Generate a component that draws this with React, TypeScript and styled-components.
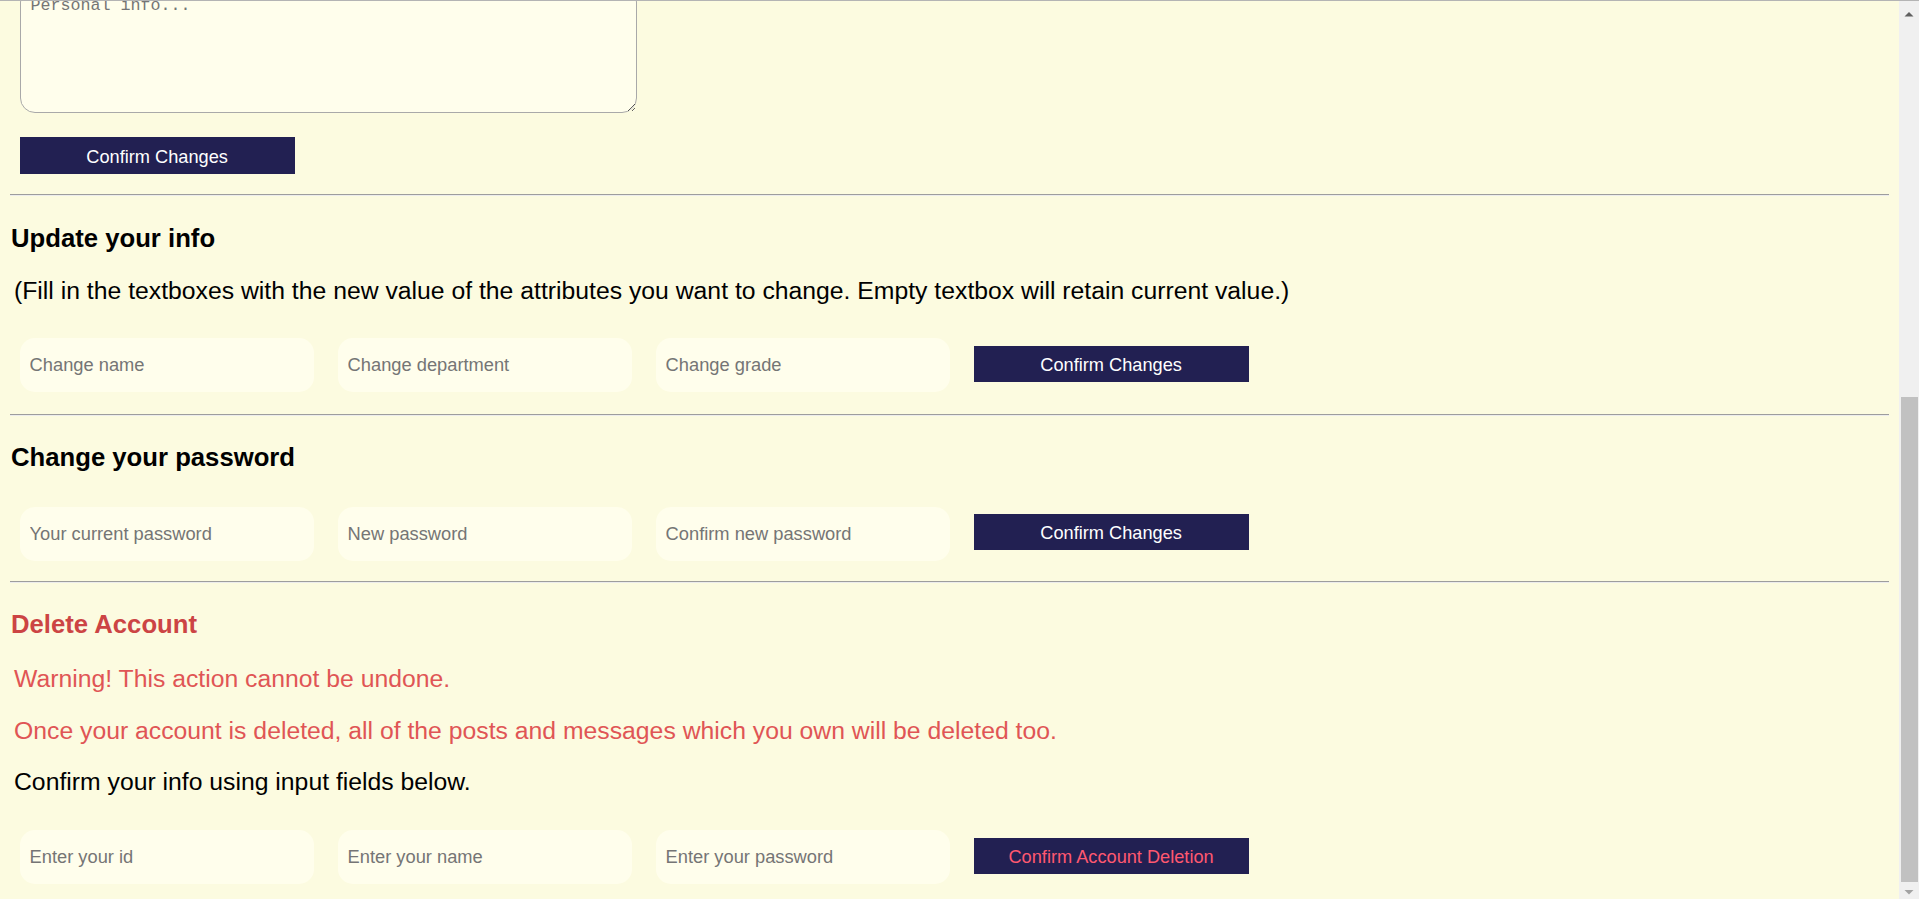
import styled, { createGlobalStyle } from 'styled-components';
import { useLayoutEffect, useRef } from 'react';

const GlobalStyle = createGlobalStyle`
  html, body {
    margin: 0;
    background: #fcfbe0;
  }
  body {
    font-family: "Liberation Sans", Arial, sans-serif;
    color: #000;
  }
`;

const Frame = styled.div`
  box-sizing: border-box;
  height: 100vh;
  display: flex;
  border-top: 1px solid #b4b4b4;
  overflow: hidden;
`;

const ScrollArea = styled.div`
  flex: 1;
  min-width: 0;
  overflow-y: auto;
  scrollbar-width: none;

  &::-webkit-scrollbar {
    display: none;
  }
`;

const Scrollbar = styled.div`
  width: 20px;
  flex: none;
  display: flex;
  flex-direction: column;
  background: #f0f0f0;
`;

const ScrollArrow = styled.svg`
  display: block;
  width: 20px;
  height: 17px;
  flex: none;
`;

const Track = styled.div`
  flex: 1;
  display: flex;
  flex-direction: column;
  justify-content: flex-end;
`;

const Thumb = styled.div`
  height: 485px;
  margin: 0 1px 0 2px;
  background: #c1c1c1;
`;

const Page = styled.main`
  display: flex;
  flex-direction: column;
  padding: 10px 10px 15px;
`;

const Upper = styled.section`
  height: 668px;
  display: flex;
  flex-direction: column;
`;

const Heading = styled.h3<{ danger?: boolean; top?: number }>`
  margin: ${(props) => props.top ?? 25}px 0 0 1px;
  font-size: 25.7px;
  line-height: 30px;
  font-weight: 700;
  color: ${(props) => (props.danger ? '#cc4444' : '#000')};
`;

const Text = styled.p<{ tone?: 'warn' | 'plain'; top?: number }>`
  margin: ${(props) => props.top ?? 22}px 0 0;
  padding-left: 4px;
  font-size: 24.75px;
  line-height: 30px;
  color: ${(props) => (props.tone === 'warn' ? '#e05555' : '#000')};
`;

const InfoBox = styled.textarea`
  box-sizing: border-box;
  margin: 10px 0 0 9.6px;
  width: 617px;
  height: 126px;
  padding: 8px 10px;
  border: 1px solid #a9a9a9;
  border-radius: 15px;
  background: #fffeec;
  font-family: "Liberation Mono", monospace;
  font-size: 16.67px;
  outline: none;

  &::placeholder {
    color: #757575;
  }
`;

const Row = styled.div<{ top?: number }>`
  display: flex;
  align-items: flex-start;
  gap: 24px;
  margin-top: ${(props) => props.top ?? 35}px;
  padding-left: 9.6px;
`;

const Field = styled.input`
  box-sizing: border-box;
  width: 294px;
  height: 54px;
  padding: 0 10px;
  border: none;
  border-radius: 15px;
  background: #fffeec;
  font-family: "Liberation Sans", Arial, sans-serif;
  font-size: 18.3px;
  outline: none;

  &::placeholder {
    color: #757575;
  }
`;

const ActionButton = styled.button<{ danger?: boolean; top?: string }>`
  box-sizing: border-box;
  width: 275px;
  height: 36px;
  margin-top: ${(props) => props.top || '7.5px'};
  padding: 3px 0 0;
  border: none;
  background: #222052;
  color: ${(props) => (props.danger ? '#ff5870' : '#fff')};
  font-family: "Liberation Sans", Arial, sans-serif;
  font-size: 18.2px;
  cursor: pointer;
`;

const FirstButton = styled(ActionButton)`
  margin-left: 9.6px;
  margin-top: 24.4px;
  height: 37px;
  align-self: flex-start;
`;

const Rule = styled.hr<{ top: number }>`
  margin: ${(props) => props.top}px 0 0;
  border: 0;
  border-top: 1px solid #9d9d9d;
  border-bottom: 1px solid #ececec;
`;

const Section = styled.section`
  display: flex;
  flex-direction: column;
`;

export default function App() {
  const scrollRef = useRef<HTMLDivElement>(null);

  useLayoutEffect(() => {
    const el = scrollRef.current;
    if (el) el.scrollTop = el.scrollHeight;
  }, []);

  return (
    <>
      <GlobalStyle />
      <Frame>
        <ScrollArea ref={scrollRef}>
          <Page>
            <Upper>
              <Heading>Your profile</Heading>
              <Text>Tell the others something about yourself.</Text>
            </Upper>
            <InfoBox placeholder="Personal info..." />
            <FirstButton type="button">Confirm Changes</FirstButton>

            <Rule top={19.3} />
            <Section>
              <Heading top={27.2}>Update your info</Heading>
              <Text top={23.1}>
                (Fill in the textboxes with the new value of the attributes you want to change.
                Empty textbox will retain current value.)
              </Text>
              <Row top={31.9}>
                <Field placeholder="Change name" />
                <Field placeholder="Change department" />
                <Field placeholder="Change grade" />
                <ActionButton type="button" top="8px">
                  Confirm Changes
                </ActionButton>
              </Row>
            </Section>

            <Rule top={22.6} />
            <Section>
              <Heading top={26}>Change your password</Heading>
              <Row top={34.5}>
                <Field type="password" placeholder="Your current password" />
                <Field type="password" placeholder="New password" />
                <Field type="password" placeholder="Confirm new password" />
                <ActionButton type="button">Confirm Changes</ActionButton>
              </Row>
            </Section>

            <Rule top={19.8} />
            <Section>
              <Heading danger top={26.5}>
                Delete Account
              </Heading>
              <Text tone="warn" top={24.9}>
                Warning! This action cannot be undone.
              </Text>
              <Text tone="warn">
                Once your account is deleted, all of the posts and messages which you own will be
                deleted too.
              </Text>
              <Text top={20.8}>Confirm your info using input fields below.</Text>
              <Row top={32.6}>
                <Field placeholder="Enter your id" />
                <Field placeholder="Enter your name" />
                <Field type="password" placeholder="Enter your password" />
                <ActionButton type="button" danger top="8px">
                  Confirm Account Deletion
                </ActionButton>
              </Row>
            </Section>
          </Page>
        </ScrollArea>
        <Scrollbar>
          <ScrollArrow viewBox="0 0 20 17">
            <polygon points="5.5,15.5 10,11 14.5,15.5" fill="#606060" />
          </ScrollArrow>
          <Track>
            <Thumb />
          </Track>
          <ScrollArrow viewBox="0 0 20 17">
            <polygon points="5.5,8 14.5,8 10,12.5" fill="#a3a3a3" />
          </ScrollArrow>
        </Scrollbar>
      </Frame>
    </>
  );
}
